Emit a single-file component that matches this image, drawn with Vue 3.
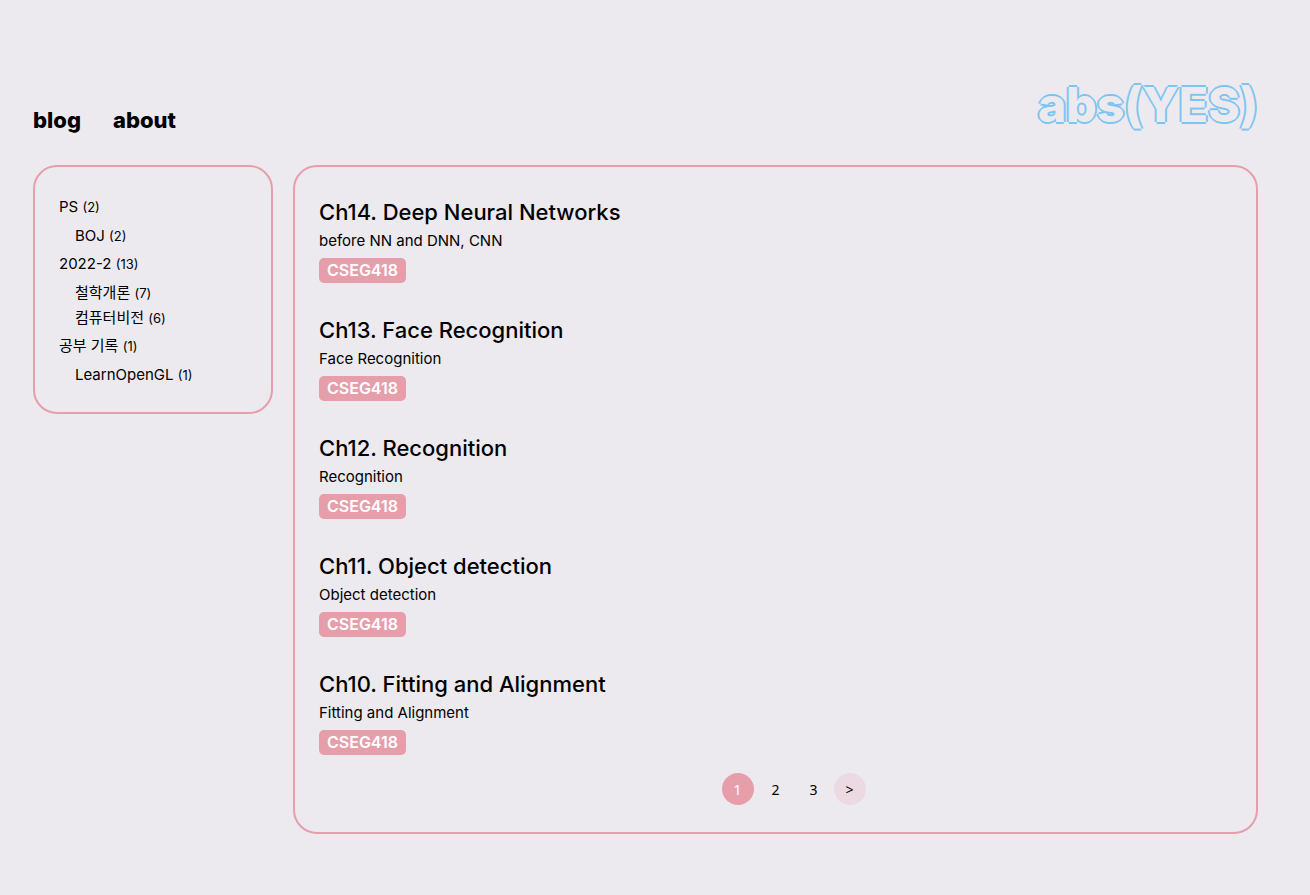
<script setup>
const categories = [
  { name: 'PS', count: 2, children: [{ name: 'BOJ', count: 2 }] },
  {
    name: '2022-2',
    count: 13,
    children: [
      { name: '철학개론', count: 7 },
      { name: '컴퓨터비전', count: 6 },
    ],
  },
  { name: '공부 기록', count: 1, children: [{ name: 'LearnOpenGL', count: 1 }] },
]

const posts = [
  { title: 'Ch14. Deep Neural Networks', summary: 'before NN and DNN, CNN', tag: 'CSEG418' },
  { title: 'Ch13. Face Recognition', summary: 'Face Recognition', tag: 'CSEG418' },
  { title: 'Ch12. Recognition', summary: 'Recognition', tag: 'CSEG418' },
  { title: 'Ch11. Object detection', summary: 'Object detection', tag: 'CSEG418' },
  { title: 'Ch10. Fitting and Alignment', summary: 'Fitting and Alignment', tag: 'CSEG418' },
]
</script>

<template>
  <div class="page">
    <header class="header">
      <nav class="menu">
        <a href="#blog">blog</a>
        <a href="#about">about</a>
      </nav>
      <a class="logo" href="#home">abs(YES)</a>
    </header>

    <div class="body">
      <aside class="panel sidebar">
        <ul class="categories">
          <li v-for="category in categories" :key="category.name">
            <a href="#category">{{ category.name }} <small>({{ category.count }})</small></a>
            <ul class="children">
              <li v-for="child in category.children" :key="child.name">
                <a href="#category">{{ child.name }} <small>({{ child.count }})</small></a>
              </li>
            </ul>
          </li>
        </ul>
      </aside>

      <main class="panel content">
        <article v-for="post in posts" :key="post.title" class="post">
          <h2><a href="#post">{{ post.title }}</a></h2>
          <p>{{ post.summary }}</p>
          <a class="tag" href="#tag">{{ post.tag }}</a>
        </article>

        <nav class="pagination" aria-label="Pages">
          <button type="button" class="current" aria-current="page">1</button>
          <button type="button">2</button>
          <button type="button">3</button>
          <button type="button" class="next" aria-label="Next page">&gt;</button>
        </nav>
      </main>
    </div>
  </div>
</template>

<style>
body {
  background: #eceaef;
}
</style>

<style scoped>
.page {
  box-sizing: border-box;
  padding: 76px 52px 61px 33px;
  color: #000;
  font-family: Inter, "Noto Sans CJK KR", sans-serif;
  font-size: 15px;
}

a {
  color: inherit;
  text-decoration: none;
}

.header {
  display: flex;
  justify-content: space-between;
  align-items: flex-end;
  margin-bottom: 31px;
}

.menu {
  display: flex;
  gap: 32px;
  font-size: 22px;
  font-weight: 800;
  line-height: 28px;
}

.logo {
  color: #eceaef;
  font-size: 48px;
  font-weight: 800;
  line-height: 58px;
  text-shadow: -2px 0 0 #7cc4f2, 2px 0 0 #7cc4f2, 0 -2px 0 #7cc4f2, 0 2px 0 #7cc4f2;
}

.body {
  display: flex;
  align-items: flex-start;
  gap: 20px;
}

.panel {
  box-sizing: border-box;
  border: 2px solid #e79eab;
  border-radius: 24px;
}

.sidebar {
  flex: 0 0 240px;
  padding: 27px 24px 22px;
}

ul {
  margin: 0;
  padding: 0;
  list-style: none;
}

.categories a {
  display: block;
  height: 25px;
  line-height: 25px;
}

.categories small {
  font-size: 13px;
}

.children {
  padding: 4px 0 3px 16px;
}

.content {
  flex: 1;
  min-width: 0;
  padding: 31px 24px 27px;
}

.post {
  margin-bottom: 33px;
}

.post:last-of-type {
  margin-bottom: 18px;
}

.post h2 {
  margin: 0;
  font-size: 22px;
  font-weight: 550;
  line-height: 28px;
}

.post p {
  margin: 3px 0 5px;
  line-height: 24px;
}

.tag {
  display: block;
  width: fit-content;
  padding: 0 8px;
  border-radius: 5px;
  background: #e79eab;
  color: #fff;
  font-size: 16px;
  font-weight: 600;
  line-height: 25px;
}

.pagination {
  display: flex;
  justify-content: center;
  gap: 6px;
  padding-left: 36px;
}

.pagination button {
  width: 32px;
  height: 32px;
  padding: 0;
  border: 0;
  border-radius: 50%;
  background: transparent;
  color: #000;
  font-family: "Noto Sans", sans-serif;
  font-size: 14px;
}

.pagination .current {
  background: #e79eab;
  color: #fff;
}

.pagination .next {
  margin-left: -2px;
  background: #ebdae2;
}
</style>
